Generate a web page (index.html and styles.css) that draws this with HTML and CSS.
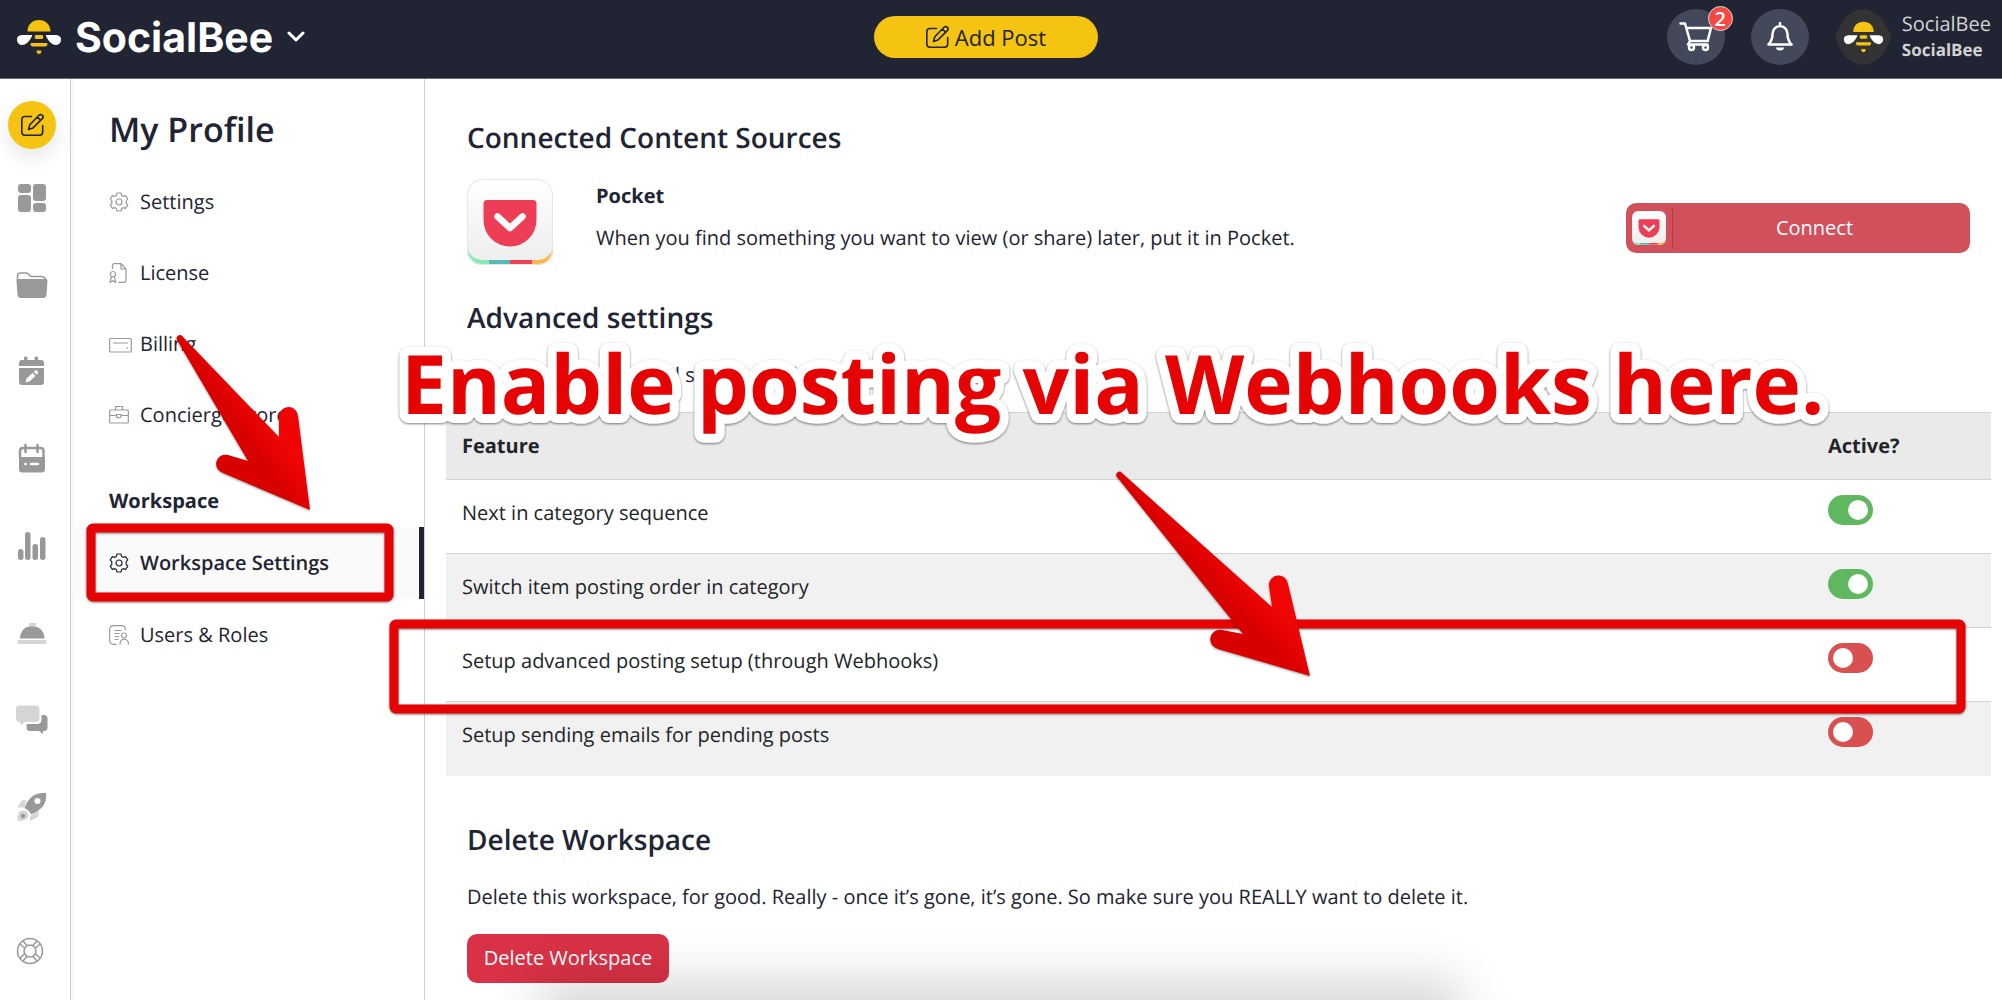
FILE: index.html
```html
<!DOCTYPE html>
<html lang="en">
<head>
<meta charset="utf-8">
<meta name="viewport" content="width=device-width, initial-scale=1">
<title>SocialBee – Workspace Settings</title>
<link rel="stylesheet" href="styles.css">
</head>
<body>
<svg class="sprite" aria-hidden="true">
  <symbol id="bee" viewBox="0 0 46 34">
    <path fill="#f5c311" d="M11.500 11.500C11.500 4.500 16.500 0 23 0s11.500 4.500 11.500 11.500zM20 15h6q1.300 0 1.300 2t-1.300 2h-6q-1.300 0-1.300-2t1.300-2zM15.500 23h15q1.500 0 1 1.600-.6 2-2.200 2H16.700q-1.600 0-2.200-2-.5-1.600 1-1.600zM21.300 30.500h3.400q1 0 .8 1-.6 2.500-2.500 2.500t-2.500-2.500q-.2-1 .8-1z"/>
    <path fill="#fff" d="M1 19.500C1 16 4 15 7 15h8.500q1 0 .5 1C14 20.500 10.500 25 6 25c-3 0-5-2.500-5-5.500zM45 19.500C45 16 42 15 39 15h-8.500q-1 0-.5 1C32 20.500 35.500 25 40 25c3 0 5-2.500 5-5.500z"/>
  </symbol>
  <symbol id="edit" viewBox="0 0 24 24">
    <path fill="none" stroke="currentColor" stroke-width="1.600" stroke-linecap="round" stroke-linejoin="round" d="M11.500 3.500H5A3.200 3.200 0 0 0 1.800 6.700V19A3.200 3.200 0 0 0 5 22.200H19.500A3.200 3.200 0 0 0 22.700 19V12.500M8.500 16.500l1.300-4.800L19 2.300a2.300 2.300 0 0 1 3.300 3.300L13 14.900zM17.300 4l3.300 3.300"/>
  </symbol>
  <symbol id="gear" viewBox="0 0 20 20">
    <path fill="none" stroke="currentColor" stroke-width="1.200" stroke-linejoin="round" d="M8 1h4l.6 2.400 1.500.9L16.600 3.600 18.800 6.800 17.200 8.700v2.600l1.600 1.900-2.200 3.200-2.500-.7-1.500.9L12 19H8l-.6-2.400-1.500-.9-2.500.7L1.200 13.200 2.800 11.300V8.700L1.200 6.800 3.400 3.600 5.900 4.300 7.400 3.400z"/>
    <circle cx="10" cy="10" r="3" fill="none" stroke="currentColor" stroke-width="1.200"/>
  </symbol>
  <symbol id="pocket" viewBox="0 0 86 86">
    <clipPath id="tile"><rect width="86" height="86" rx="15"/></clipPath>
    <linearGradient id="sheen" x2="0" y2="1"><stop stop-color="#fff"/><stop offset="1" stop-color="#eee"/></linearGradient>
    <g clip-path="url(#tile)">
      <path fill="#87e9b6" d="M0 60h22v26H0z"/><path fill="#55bab4" d="M22 60h21v26H22z"/><path fill="#ef4056" d="M43 60h22v26H43z"/><path fill="#fcb645" d="M65 60h21v26H65z"/>
      <rect width="86" height="81" rx="15" fill="url(#sheen)"/>
    </g>
    <rect x=".5" y=".5" width="85" height="85" rx="15" fill="none" stroke="#e5e5e5"/>
    <path fill="#ee3d57" d="M20 21h46q3.500 0 3.500 3.500V41a26.500 26.500 0 0 1-53 0V24.500Q16.500 21 20 21z"/>
    <path fill="none" stroke="#fafafa" stroke-width="6.500" stroke-linecap="round" stroke-linejoin="round" d="M30.500 37.500 43 49l12.500-11.500"/>
  </symbol>
</svg>

<header class="topbar">
  <a class="brand" href="#">
    <svg class="brand-mark"><use href="#bee"/></svg>
    <span class="brand-name">SocialBee</span>
    <svg class="brand-caret" viewBox="0 0 18 12"><path d="M2 2l7 7 7-7"/></svg>
  </a>
  <button class="add-post" type="button"><svg><use href="#edit"/></svg>Add Post</button>
  <div class="account">
    <button class="round" type="button" aria-label="Cart">
      <svg class="cart" viewBox="0 0 34 30"><path d="M1.500 1.500H6l5 17.500h18M7.500 6H32l-3 11.500M11 19l-2 3.500h19.500"/><circle cx="12.500" cy="25.500" r="2.500"/><circle cx="26.500" cy="25.500" r="2.500"/></svg>
      <span class="badge">2</span>
    </button>
    <button class="round" type="button" aria-label="Notifications">
      <svg class="bell" viewBox="0 0 26 30"><path d="M13 1v3M1.500 22.500C5 19 5.500 16 5.500 12a7.500 8 0 0 1 15 0c0 4 .5 7 4 10.500z"/><path class="solid" d="M9 25.500h8a4 3 0 0 1-8 0z"/></svg>
    </button>
    <a class="user" href="#">
      <svg class="avatar" viewBox="0 0 56 56"><path fill="#333" d="M21 1.500q7-2.500 14 0l9 5q2.500 2 4 5l7 13q1.500 3.500 0 7l-7 13q-1.500 3-4 5l-9 5q-7 2.500-14 0l-9-5q-2.500-2-4-5l-7-13q-1.500-3.500 0-7l7-13q1.500-3 4-5z"/><use href="#bee" x="8" y="12" width="41" height="32"/></svg>
      <span class="user-text"><span class="user-name">SocialBee</span><strong class="user-org">SocialBee</strong></span>
    </a>
  </div>
</header>

<div class="shell">
  <nav class="rail" aria-label="Main">
    <a class="rail-new" href="#" aria-label="New post"><svg><use href="#edit"/></svg></a>
    <a href="#" aria-label="Dashboard"><svg viewBox="0 0 32 32"><rect x="2" y="2" width="13" height="9" rx="3"/><rect x="2" y="13" width="13" height="17" rx="3"/><rect x="17" y="2" width="13" height="17" rx="3"/><rect x="17" y="21" width="13" height="9" rx="3"/></svg></a>
    <a href="#" aria-label="Content"><svg viewBox="0 0 32 32"><path d="M1 10h29q1.500 0 1.500 2l-1 14q-.3 3-3.500 3H5q-3 0-3.500-3L.5 12Q.4 10 1 10z"/><path class="line" d="M1.500 11V7q0-3 3-3H11l4 3.500h10q4 0 5 3.500"/></svg></a>
    <a href="#" aria-label="Drafts"><svg viewBox="0 0 32 32"><path d="M3 10V7q0-3 3-3h2V1.500q0-1 1.800-1t1.700 1V4h7V1.500q0-1 1.800-1t1.700 1V4h3q3 0 3 3v3zM3 12h25v14q0 3-3 3H6q-3 0-3-3z"/><path class="cut" d="M9.500 26.500l1-4 6-5.500 3 3-6 5.500zM18 15.500q2.500-2 3.500-.5 1.500 1 0 3l-.8.600-3-2.500z"/></svg></a>
    <a href="#" aria-label="Calendar"><svg viewBox="0 0 32 32"><path class="line thick" d="M4 14V8q0-3 3-3h17.500q3 0 3 3v6M9.500 2v7M21.500 2v7"/><path d="M3 14h26v12q0 3.500-3.500 3.500h-19Q3 29.500 3 26z"/><path class="cutline" d="M9.500 21h.1M15 21h7"/></svg></a>
    <a href="#" aria-label="Analytics"><svg viewBox="0 0 32 32"><rect x="2" y="19" width="5.500" height="11" rx="2.700"/><rect x="9" y="2" width="5.500" height="28" rx="2.700"/><rect x="16.500" y="14" width="5.500" height="16" rx="2.700"/><rect x="24" y="7" width="5.500" height="23" rx="2.700"/></svg></a>
    <a href="#" aria-label="Concierge"><svg viewBox="0 0 32 32"><path d="M4 21.500C4 14 9 9 16 9s12.500 5 12.500 12.500z"/><path class="pale" d="M2.500 23h27q1 0 1 2t-1 2h-27q-1 0-1-2t1-2zM13 6h7v2.500l-1.500 1h-4L13 8.500z"/></svg></a>
    <a href="#" aria-label="Engage"><svg viewBox="0 0 32 32"><path d="M25.500 11H28q3.500 0 3.500 3.500v9q0 3-3 3.500h-1.500v3l-4-3H14q-3.500 0-3.500-3.500V20H21q4.500 0 4.500-4.500z"/><path class="pale" d="M3.500 1.500h16.500q3.500 0 3.500 3.500v9.500q0 3.500-3.500 3.500H9l-4.500 3.500V18Q0 18 0 14.500V5q0-3.500 3.500-3.500z"/></svg></a>
    <a href="#" aria-label="Boost"><svg viewBox="0 0 32 32"><path class="pale" d="M10 9l-4.500.500L1.500 16.500h7zM14 25l9-5-1 6-8 4zM1.500 30c0-6 .5-10.500 5.500-10.500s6 3.500 5 6.500S7 30 1.500 30z"/><path d="M8.500 17C12 7 18.500 1 30 2c1.500 11-5 17.500-15 21.500-1-3-3.500-5-6.500-6.500z"/><circle cx="7" cy="25" r="2.200"/><circle class="cut" cx="21.500" cy="10" r="3"/></svg></a>
    <a class="rail-help" href="#" aria-label="Help"><svg viewBox="0 0 28 28"><g class="line"><circle cx="14" cy="14" r="12.500"/><circle cx="14" cy="14" r="6"/><path d="M4 7l5 4.500M7 4l4.500 5M21 4l-4.500 5M24 7l-5 4.500M24 21l-5-4.500M21 24l-4.500-5M7 24l4.500-5M4 21l5-4.500"/></g></svg></a>
  </nav>

  <aside class="profile">
    <h1>My Profile</h1>
    <nav aria-label="Profile">
      <a href="#"><svg><use href="#gear"/></svg>Settings</a>
      <a href="#"><svg viewBox="0 0 20 20"><path d="M3.500 6V2.500Q3.500.700 5.500.700H12L17 6v11.500q0 1.800-2 1.800H9.500M12 .7V6h5M4 8.500a2.700 2.700 0 1 1-.1 0M2.500 13.500L1 19.300l2.800-1.500 2.800 1.500L5.500 13.500"/></svg>License</a>
      <a href="#"><svg class="wide" viewBox="0 0 23 20"><rect x=".7" y="4.500" width="21.600" height="13.500" rx="1"/><path d="M4 9h15M17 14h2"/></svg>Billing</a>
      <a href="#"><svg viewBox="0 0 20 20"><rect x=".7" y="5" width="18.600" height="13" rx="1"/><path d="M6.500 5V1.500h7V5M.7 10.500h6.800M12 10.500h7.300M7.500 9.500h4.500v2.500q-2.300 1.500-4.500 0z"/></svg>Concierge Store</a>
    </nav>
    <h2>Workspace</h2>
    <nav aria-label="Workspace">
      <a class="current" href="#" aria-current="page"><svg><use href="#gear"/></svg>Workspace Settings</a>
      <a href="#"><svg viewBox="0 0 20 20"><path d="M7.500 19.300H4.500Q.7 19.300.7 15.500V4.500Q.7.700 4.500.700h8Q16.300.700 16.300 4.500V5M5.500 5.500h7M5.500 8.500h5M5.500 11.500h4.500M5.500 14.500h4M15 8a2.500 2.500 0 1 1-.1 0M11 19.500c0-7 8.500-7 8.500 0"/></svg>Users &amp; Roles</a>
    </nav>
  </aside>

  <main>
    <section class="block sources">
      <h2>Connected Content Sources</h2>
      <div class="source">
        <svg class="source-logo"><use href="#pocket"/></svg>
        <div class="source-text"><h3>Pocket</h3><p>When you find something you want to view (or share) later, put it in Pocket.</p></div>
        <button class="connect" type="button"><span class="connect-logo"><svg><use href="#pocket"/></svg></span><span class="connect-label">Connect</span></button>
      </div>
    </section>
    <section class="advanced">
      <div class="block"><h2>Advanced settings</h2><p>Change your advanced settings in this place.</p></div>
      <table>
        <thead><tr><th>Feature</th><th class="state">Active?</th></tr></thead>
        <tbody>
          <tr><td><label for="f1">Next in category sequence</label></td><td class="state"><input id="f1" type="checkbox" checked></td></tr>
          <tr><td><label for="f2">Switch item posting order in category</label></td><td class="state"><input id="f2" type="checkbox" checked></td></tr>
          <tr><td><label for="f3">Setup advanced posting setup (through Webhooks)</label></td><td class="state"><input id="f3" type="checkbox"></td></tr>
          <tr><td><label for="f4">Setup sending emails for pending posts</label></td><td class="state"><input id="f4" type="checkbox"></td></tr>
        </tbody>
      </table>
    </section>
    <section class="block delete">
      <h2>Delete Workspace</h2>
      <p>Delete this workspace, for good. Really - once it’s gone, it’s gone. So make sure you REALLY want to delete it.</p>
      <button class="danger" type="button">Delete Workspace</button>
    </section>
  </main>
</div>

<div class="dock-shadow"></div>

<svg class="guide" viewBox="0 0 2002 1000">
  <defs>
    <linearGradient id="red1" gradientUnits="userSpaceOnUse" x1="240" y1="440" x2="268" y2="420"><stop offset=".2" stop-color="#d90000"/><stop offset="1" stop-color="#f00505"/></linearGradient>
    <linearGradient id="red2" gradientUnits="userSpaceOnUse" x1="1220" y1="600" x2="1246" y2="576"><stop offset=".2" stop-color="#d90000"/><stop offset="1" stop-color="#f00505"/></linearGradient>
  </defs>
  <rect class="frame" x="91" y="528" width="298" height="69" rx="2"/>
  <rect class="frame" x="394" y="624" width="1567" height="85" rx="2"/>
  <text class="callout" x="401" y="414">Enable posting via Webhooks here.</text>
  <path class="arrow" fill="url(#red1)" d="M183 337 279 437V417a9 9 0 0 1 19-1L310 510 223 473a9 9 0 0 1 5-18l20 6L177 340a3 3 0 0 1 6-3z"/>
  <path class="arrow" fill="url(#red2)" d="M1122 473 1272 607 1269 586a9 9 0 0 1 19-2L1310 676 1218 649a9 9 0 0 1 4-19l21 4L1117 477a3 3 0 0 1 5-4z"/>
</svg>
</body>
</html>
```
FILE: styles.css
```css
*, *::before, *::after { box-sizing: border-box; }
body {
  margin: 0;
  min-height: 100vh;
  display: flex;
  flex-direction: column;
  position: relative;
  background: #fff;
  color: #212433;
  font: 20px/28px "Open Sans", "Noto Sans", sans-serif;
  text-rendering: geometricPrecision;
}
h1, h2, h3, p { margin: 0; }
a { color: inherit; text-decoration: none; }
button { font: inherit; border: 0; padding: 0; cursor: pointer; }
.sprite { position: absolute; width: 0; height: 0; }

/* Top bar */
.topbar {
  flex: none;
  display: grid;
  grid-template-columns: 1fr auto 1fr;
  align-items: center;
  height: 79px;
  padding: 0 11px 5px 16px;
  background: #212433;
  border-bottom: 1px solid #6b6d78;
}
.brand { display: flex; align-items: center; color: #fff; }
.brand-mark { width: 46px; height: 34px; }
.brand-name { margin-left: 13px; font: 700 41px/56px Inter, sans-serif; }
.brand-caret { width: 18px; height: 12px; margin-left: 14px; fill: none; stroke: #fff; stroke-width: 3; stroke-linecap: round; stroke-linejoin: round; }
.add-post {
  display: flex;
  align-items: center;
  justify-content: center;
  gap: 6px;
  width: 224px;
  height: 42px;
  margin-right: 36px;
  border-radius: 21px;
  background: #f5c311;
  color: #212433;
  font-size: 22px;
}
.add-post svg { width: 24px; height: 24px; }
.account { display: flex; justify-content: flex-end; align-items: center; }
.round {
  position: relative;
  display: grid;
  place-items: center;
  width: 58px;
  height: 56px;
  margin-right: 26px;
  border-radius: 50%;
  background: #44485b;
  color: #fff;
}
.round svg { fill: none; stroke: #fff; stroke-width: 2.500; stroke-linecap: round; stroke-linejoin: round; }
.round .solid { fill: #fff; stroke: none; }
.cart { width: 34px; height: 30px; }
.bell { width: 26px; height: 30px; }
.badge {
  position: absolute;
  top: -3px;
  right: -8px;
  width: 25px;
  height: 25px;
  border: 1px solid #d8d8d8;
  border-radius: 50%;
  background: #f54842;
  font-weight: 600;
  font-size: 20px;
  line-height: 23px;
}
.user { display: flex; align-items: center; gap: 11px; }
.avatar { width: 56px; height: 56px; }
.user-text { display: flex; flex-direction: column; color: #d2d2d4; }
.user-name { font-size: 20px; line-height: 26px; }
.user-org { font-size: 17px; line-height: 26px; }

/* Columns */
.shell { flex: 1; display: flex; }
.rail {
  flex: none;
  display: flex;
  flex-direction: column;
  align-items: center;
  width: 74px;
  padding: 22px 8px 25px 0;
  border-right: 3px solid #f7f7f7;
  box-shadow: inset -1px 0 #cfcfcf;
  fill: #999;
  color: #212433;
}
.rail a { flex: none; display: grid; place-items: center; width: 48px; height: 48px; margin-bottom: 39px; }
.rail svg { width: 32px; height: 32px; }
.rail .rail-new { margin-bottom: 25px; border-radius: 50%; background: #f5c311; box-shadow: 0 8px 20px rgba(0, 0, 0, .1); }
.rail .rail-new svg { width: 24px; height: 24px; }
.rail .rail-help { margin: auto 4px 0 0; }
.rail .rail-help svg { width: 28px; height: 28px; }
.rail .pale { fill: #d5d5d5; }
.rail .cut { fill: #fff; }
.rail .line { fill: none; stroke: #999; stroke-width: 1.500; }
.rail .thick { stroke-width: 2.500; stroke-linecap: round; }
.rail .cutline { fill: none; stroke: #fff; stroke-width: 2.500; stroke-linecap: round; }

.profile { flex: none; width: 351px; border-right: 1px solid #cfcfcf; padding-top: 26px; }
.profile h1 { padding-left: 35px; font-size: 34px; line-height: 48px; font-weight: 600; }
.profile h1 + nav { margin-top: 13px; }
.profile h2 { padding: 37px 0 12px 35px; font-size: 20px; line-height: 28px; font-weight: 700; }
.profile nav a { display: flex; align-items: center; height: 71px; padding-left: 35px; border-right: 5px solid transparent; }
.profile nav a.current { height: 72px; background: #fafafa; border-color: #212433; font-weight: 600; }
.profile nav svg { width: 20px; height: 20px; margin-right: 11px; color: #999; fill: none; stroke: #999; stroke-width: 1.200; overflow: visible; }
.profile nav .wide { width: 23px; margin-right: 8px; }
.profile nav .current svg { color: #212433; stroke: #212433; }

main { flex: 1; min-width: 0; padding: 0 11px 0 21px; }
.block { padding-left: 21px; }
main h2 { font-size: 28px; line-height: 40px; font-weight: 600; }
.sources { padding-top: 39px; padding-right: 21px; }
.source { display: flex; align-items: flex-start; margin-top: 21px; }
.source-logo { flex: none; width: 86px; height: 86px; }
.source-text { flex: 1; padding-left: 43px; padding-top: 3px; }
.source h3 { font-size: 20px; line-height: 28px; font-weight: 700; }
.source p { margin-top: 14px; }
.connect { display: flex; align-items: center; width: 344px; height: 50px; margin-top: 24px; border-radius: 10px; background: #d1505c; color: #fff; }
.connect-logo { display: flex; align-items: center; height: 42px; padding: 0 6px; border-right: 1px solid #a93e49; }
.connect-logo svg { width: 34px; height: 34px; }
.connect-label { flex: 1; padding-right: 14px; }

.advanced { padding-top: 33px; }
.advanced p { padding: 23px 0; }
table { width: 100%; border-collapse: collapse; color: #212529; }
th, td { height: 74px; padding: 0 16px; border-top: 1px solid #d3d3d3; text-align: left; }
th { height: 67px; background: #eaeaea; font-weight: 700; }
th.state, td.state { width: 179px; }
tbody td { padding: 15px 16px; vertical-align: top; }
tbody label { display: block; line-height: 36px; }
tbody tr:nth-child(even) { background: #f1f1f1; }
td.state input {
  appearance: none;
  display: flex;
  align-items: center;
  width: 45px;
  height: 30px;
  margin: 0;
  padding: 0 5px;
  border-radius: 15px;
  background: #d95050;
}
td.state input::before { content: ""; width: 20px; height: 20px; border-radius: 50%; background: #fff; }
td.state input:checked { justify-content: flex-end; background: #5fb760; }

.delete { padding-top: 44px; }
.delete p { margin-top: 23px; }
.danger { width: 202px; height: 49px; margin-top: 23px; border-radius: 10px; background: #d93246; color: #fff; }

.dock-shadow { position: absolute; bottom: 0; left: 29%; right: 29%; height: 0; box-shadow: 0 20px 50px 40px rgba(0, 0, 0, .16); clip-path: inset(-90px -120px 0 -120px); }

/* Guide marks over the page */
.guide { position: absolute; top: 0; left: 0; width: 100%; pointer-events: none; }
.frame { fill: none; stroke: #e60303; stroke-width: 9; filter: drop-shadow(0 1px 1px rgba(0, 0, 0, .5)); }
.arrow { filter: drop-shadow(0 1px 1px rgba(0, 0, 0, .4)); }
.callout {
  font: 700 82px "Open Sans", sans-serif;
  fill: #e60303;
  stroke: #fff;
  stroke-width: 18;
  stroke-linejoin: round;
  paint-order: stroke;
  filter: drop-shadow(0 1px 1px rgba(0, 0, 0, .5));
}
```
